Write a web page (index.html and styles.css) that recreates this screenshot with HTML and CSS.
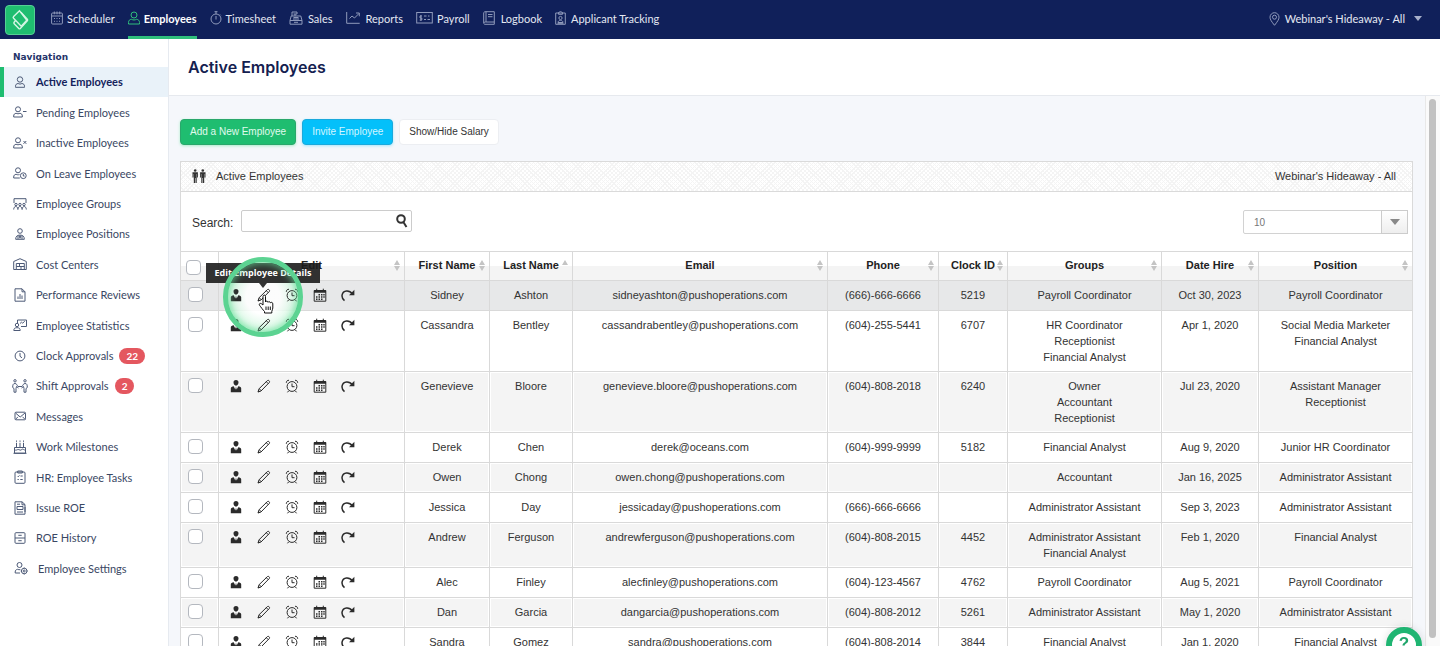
FILE: index.html
```html
<!DOCTYPE html>
<html lang="en">
<head>
<meta charset="utf-8">
<title>Active Employees</title>
<link rel="stylesheet" href="styles.css">
</head>
<body>
<svg class="sprite" aria-hidden="true">
  <symbol id="person" viewBox="0 0 14 14"><circle cx="7" cy="4" r="3"/><path d="M1.500 13v-1.500c0-2 1.200-3 3-3.200 1.500.9 3.500.9 5 0 1.800.2 3 1.200 3 3.200V13z"/></symbol>
  <symbol id="i-user" viewBox="0 0 14 14"><circle cx="7" cy="4.500" r="2.700"/><path d="M2.500 12.300v-1c0-1.800 1-2.600 2.600-2.800 1.200.7 2.600.7 3.800 0 1.600.2 2.600 1 2.600 2.800v1z"/></symbol>
  <symbol id="i-pending" viewBox="0 0 14 14"><circle cx="5" cy="4.300" r="2.500"/><path d="M.7 12v-1c0-1.700.9-2.500 2.400-2.700 1.200.6 2.600.6 3.800 0 1.500.2 2.400 1 2.400 2.700v1zM10 6.500h3.500"/></symbol>
  <symbol id="i-inactive" viewBox="0 0 14 14"><circle cx="5" cy="4.300" r="2.500"/><path d="M.7 12v-1c0-1.700.9-2.500 2.400-2.700 1.200.6 2.600.6 3.800 0 1.500.2 2.400 1 2.400 2.700v1zM10.500 5l2.800 2.800M13.300 5l-2.800 2.800"/></symbol>
  <symbol id="i-leave" viewBox="0 0 14 14"><circle cx="5" cy="4.300" r="2.500"/><path d="M6.800 12H.7v-1c0-1.700.9-2.500 2.400-2.700 1.200.6 2.200.6 3.400.2"/><circle cx="10.300" cy="9.700" r="2.900"/><path d="M10.300 8v2h1.300"/></symbol>
  <symbol id="i-groups" viewBox="0 0 14 14"><path d="M1 6V1.700h12V6"/><circle cx="3" cy="7.500" r="1.200"/><circle cx="7" cy="7.500" r="1.200"/><circle cx="11" cy="7.500" r="1.200"/><path d="M.7 12.500c0-4 4.200-4 4.200 0 0-4 4.200-4 4.200 0 0-4 4.200-4 4.200 0"/></symbol>
  <symbol id="i-position" viewBox="0 0 14 14"><circle cx="7" cy="4" r="2.300"/><path d="M2.700 12.300c0-3 1.500-4.200 4.300-4.200s4.300 1.200 4.300 4.200zM6 8.300l1 3 1-3M5 9v3M9 9v3"/></symbol>
  <symbol id="i-cost" viewBox="0 0 14 14"><path d="M.7 12.500v-8L7 1.700l6.300 2.800v8h-10V6.500h8v6M3.300 9.500h8M6.500 6.500v3M8 9.500v3M.7 12.500h3"/></symbol>
  <symbol id="i-review" viewBox="0 0 14 14"><path d="M2 .8h7l3 3v9.400H2zM9 .8v3h3M5 11V8.500M7 11V6M9 11V7.500"/></symbol>
  <symbol id="i-stats" viewBox="0 0 14 14"><path d="M4.500 5V2h9v6.500H8M7 5.500l1.500-1.300 1.200 1 2-2"/><circle cx="4" cy="7" r="1.700"/><path d="M.8 12.500c0-2 1-2.800 3.200-2.800s3.200.8 3.200 2.800z"/></symbol>
  <symbol id="i-clock" viewBox="0 0 14 14"><circle cx="7" cy="7" r="4.900"/><path d="M7 4v3.300l2 1.500"/></symbol>
  <symbol id="i-shift" viewBox="0 0 16 14"><circle cx="3" cy="1.800" r="1.200"/><circle cx="13" cy="1.800" r="1.200"/><path d="M3 4.500C1 4.500.7 6 .7 8.500L2 9.500v3.700h2V9.500l.5-2L6.500 9M3 4.500c1.500 0 2 1.500 3 3h4c1-1.500 1.500-3 3-3M13 4.500c2 0 2.300 1.500 2.300 4L14 9.500v3.700h-2V9.500l-.5-2L9.500 9"/></symbol>
  <symbol id="i-mail" viewBox="0 0 14 14"><rect x="2" y="3.200" width="10.500" height="7.600" rx="1"/><path d="M2.500 4l4.700 4L12 4M2.500 10.300l2.500-2.500M12 10.300L9.500 7.800"/></symbol>
  <symbol id="i-cake" viewBox="0 0 14 14"><path d="M1.500 13.200V7.500h11v5.700zM.5 13.300h13M1.500 9.500c1.400 1.500 2.400 0 3.700 0s2.300 1.500 3.600 0 2.300 1.500 3.700 0M3.500 7.500V2.800M7 7.500V2.800M10.500 7.500V2.800M3.500 1.800V.5M7 1.800V.5M10.500 1.800V.5"/></symbol>
  <symbol id="i-tasks" viewBox="0 0 14 14"><rect x="2" y="2" width="10" height="11.300" rx="1"/><path d="M4.700 2V1h4.600v2H4.700zM4.500 6l.7.700L6.500 5.500M7.500 6h2.200M4.500 9.500h1.300M7.300 9.500h2.400"/></symbol>
  <symbol id="i-issue" viewBox="0 0 14 14"><path d="M2 .8h7l3 2.700v9.700H2zM9 .8v3h3M4 3.200h3M4 5.500h6v3H4zM4 11h6M12 6v5"/></symbol>
  <symbol id="i-history" viewBox="0 0 14 14"><rect x="2" y="1.700" width="10" height="10.600" rx="1"/><path d="M2 7h10M5.300 4.300h3.400M5.300 9.700h3.400"/></symbol>
  <symbol id="i-settings" viewBox="0 0 14 14"><circle cx="5.500" cy="4" r="2.500"/><path d="M6 12H1.200v-1c0-1.700.9-2.500 2.400-2.700 1 .5 1.600.5 2.700.3"/><circle cx="10.200" cy="10" r="2.800"/><circle cx="10.200" cy="10" r="1"/><path d="M10.200 6.500v1M10.200 12.500v1M6.700 10h1M12.700 10h1"/></symbol>
  <symbol id="a-profile" viewBox="0 0 14 14"><path d="M7 1c1.700 0 2.600 1 2.500 2.600C9.400 5.300 8.300 6.700 7 6.700S4.600 5.300 4.500 3.600C4.400 2 5.300 1 7 1zM1.800 13.200V9.300C1.800 8 3 7.500 4.700 7.200l1.600 3.300L7 7.700l.7 2.800 1.600-3.300c1.700.3 2.900.8 2.900 2.100v3.900z"/></symbol>
  <symbol id="a-pencil" viewBox="0 0 14 14"><path class="line" d="M1 13l1-3.200L10.500 1.500c.9-.8 2.700.9 1.900 1.900L4 12zM2.300 9.800l2 2M9.300 2.700l2 2"/><path d="M.8 13.300l.8-2.300 1.500 1.500z"/></symbol>
  <symbol id="a-alarm" viewBox="0 0 14 14"><circle class="line" cx="7" cy="7.500" r="4.900"/><path class="line" d="M7 4.500v3.200h2.500M3.700 11.800l-1.200 1.500M10.300 11.800l1.200 1.500M1.300 3.800c0-1.700 1.200-2.700 2.700-2.500M12.700 3.800c0-1.700-1.200-2.700-2.700-2.500"/></symbol>
  <symbol id="a-calendar" viewBox="0 0 14 14"><path class="line" d="M1.200 2.500h11.600v10.700H1.200zM3.700.7v2M10.300.7v2"/><path d="M1 2.300h12v2.500H1zM5.500 6h1.500v1.400H5.500zM8 6h1.500v1.400H8zM10.300 6h1.400v1.400h-1.400zM3 8.300h1.500v1.400H3zM5.500 8.300h1.500v1.400H5.500zM8 8.300h1.500v1.400H8zM10.300 8.300h1.400v1.400h-1.400zM3 10.600h1.500V12H3zM5.500 10.600h1.500V12H5.500zM8 10.600h1.500V12H8z"/></symbol>
  <symbol id="a-redo" viewBox="0 0 14 14"><path class="bold" d="M3.500 12.700C-.5 9.500.5 3.500 5.500 3c2.700-.2 4.500 1 5.800 2.800"/><path d="M13.400 1.800v5.400H8z"/></symbol>
</svg>

<header class="topbar">
  <a class="logo" href="#" aria-label="Home"><svg viewBox="0 0 28 28"><path d="M13.500 4.700L7.600 10.400c-.6.600-.6 1.200 0 1.800l7.600 8 4.900-5.200c.6-.6.600-1.200 0-1.800z"/><path d="M9.500 14.500l-1.400 1.700c-.4.500-.4 1 .1 1.500l4.600 4.800c.5.500 1 .5 1.500 0l7-7.600c.5-.6.500-1.200 0-1.800l-6.400-7"/></svg></a>
  <nav class="mainnav">
    <a href="#"><svg class="w12" viewBox="0 0 12 14"><rect x=".6" y="2" width="10.800" height="11" rx="1"/><path d="M.6 5h10.800M3.300.5v2.800M6 .5v2.800M8.700.5v2.800M3 7.500h1M5.500 7.500h1M8 7.500h1M3 10.300h1M5.500 10.300h1M8 10.300h1"/></svg>Scheduler</a>
    <a href="#" class="current"><svg class="w12" viewBox="1 0 12 14"><use href="#person" width="14" height="14"/></svg>Employees</a>
    <a href="#"><svg class="w12" viewBox="0 0 12 14"><circle cx="6" cy="8" r="5"/><path d="M6 5v3.500M4.500.7h3M6 .7V3M10 3.500l.8.800"/></svg>Timesheet</a>
    <a href="#"><svg class="w15" viewBox="0 0 15 14"><path d="M1 9.500h12v3.700H1zM1 9.500l1.200-4.500h9.600L13 9.500M3 5V1h5v2H4.500M6 3v2M4.500 6.500h5M4 8h6M5 11.300h4"/></svg>Sales</a>
    <a href="#"><svg class="w16" viewBox="0 0 16 14"><path d="M.7 1v11.300h13M3.500 7.500L6 5l2.500 2L13 2.500M10 2h3.300v3.300"/></svg>Reports</a>
    <a href="#"><svg class="w17" viewBox="0 0 17 14"><rect x=".7" y="1.500" width="15.600" height="10.500"/><path d="M6 5H4v2h1.800v2H3.700M4.900 4v6M8 5h2.500M8 8.500h2M11.500 8.500H14M12 5h1.500"/></svg>Payroll</a>
    <a href="#"><svg class="w14" viewBox="0 0 14 14"><path d="M3 .7h8.300v12.600H2c-1 0-1.300-.8-1.300-1.500V2C.7 1 1.500.7 3 .7zM3 .7V11M.7 12c.2-.8.800-1 1.600-1h9M5 3.500h4.500M5 5.700h4.500"/></svg>Logbook</a>
    <a href="#"><svg class="w12" viewBox="0 0 12 14"><path d="M.7 2h9.600v11.300H.7zM3.500 3.300V1.500L5.500.6l2 .9v1.800zM3 11.500c0-2.800 5-2.800 5 0zM2.500 12.300h6"/><circle cx="5.500" cy="7" r="1.600"/></svg>Applicant Tracking</a>
  </nav>
  <button class="location" type="button"><svg class="w12" viewBox="0 0 12 14"><path d="M5.500 13.300C2.500 9.500 1 7.500 1 5.200a4.500 4.500 0 0 1 9 0c0 2.300-1.500 4.300-4.500 8.100z"/><circle cx="5.500" cy="5.200" r="2"/></svg><span>Webinar's Hideaway - All</span><i class="caret"></i></button>
</header>

<div class="shell">
  <aside class="sidebar">
    <h2>Navigation</h2>
    <ul>
      <li class="active"><a href="#"><svg><use href="#i-user"/></svg>Active Employees</a></li>
      <li><a href="#"><svg><use href="#i-pending"/></svg>Pending Employees</a></li>
      <li><a href="#"><svg><use href="#i-inactive"/></svg>Inactive Employees</a></li>
      <li><a href="#"><svg><use href="#i-leave"/></svg>On Leave Employees</a></li>
      <li><a href="#"><svg><use href="#i-groups"/></svg>Employee Groups</a></li>
      <li><a href="#"><svg><use href="#i-position"/></svg>Employee Positions</a></li>
      <li><a href="#"><svg><use href="#i-cost"/></svg>Cost Centers</a></li>
      <li><a href="#"><svg><use href="#i-review"/></svg>Performance Reviews</a></li>
      <li><a href="#"><svg><use href="#i-stats"/></svg>Employee Statistics</a></li>
      <li><a href="#"><svg><use href="#i-clock"/></svg>Clock Approvals<span class="count">22</span></a></li>
      <li><a href="#"><svg class="wide"><use href="#i-shift"/></svg>Shift Approvals<span class="count">2</span></a></li>
      <li><a href="#"><svg><use href="#i-mail"/></svg>Messages</a></li>
      <li><a href="#"><svg><use href="#i-cake"/></svg>Work Milestones</a></li>
      <li><a href="#"><svg><use href="#i-tasks"/></svg>HR: Employee Tasks</a></li>
      <li><a href="#"><svg><use href="#i-issue"/></svg>Issue ROE</a></li>
      <li><a href="#"><svg><use href="#i-history"/></svg>ROE History</a></li>
      <li class="last"><a href="#"><svg><use href="#i-settings"/></svg>Employee Settings</a></li>
    </ul>
  </aside>

  <main class="main">
    <h1>Active Employees</h1>
    <div class="scroller">
      <div class="content">
        <div class="buttons">
          <button type="button" class="btn add">Add a New Employee</button>
          <button type="button" class="btn invite">Invite Employee</button>
          <button type="button" class="btn plain">Show/Hide Salary</button>
        </div>
        <section class="panel">
          <header class="panel-head">
            <svg viewBox="0 0 14 14"><circle cx="3.200" cy="1.500" r="1.300"/><circle cx="10.800" cy="1.500" r="1.300"/><path d="M.5 3.300h5.400V8.500H5V5h-.3v9H3.500V9H3v5H1.800V5H1.500v3.500H.5zM8.100 3.300h5.400v5.200h-1V5h-.3v9H11V9h-.5v5H9.300V5H9v3.500h-.9z"/></svg>
            <span>Active Employees</span>
            <span class="site">Webinar's Hideaway - All</span>
          </header>
          <div class="tools">
            <label for="search">Search:</label>
            <div class="searchbox">
              <input id="search" type="text">
              <svg viewBox="0 0 12 14"><circle cx="5" cy="5" r="3.800"/><path d="M7.300 8l3.200 5"/></svg>
            </div>
            <div class="pagesize">
              <select aria-label="Rows per page"><option>10</option><option>25</option><option>50</option></select>
              <span class="drop"><i></i></span>
            </div>
          </div>
          <table>
            <colgroup><col class="c-check"><col class="c-edit"><col class="c-first"><col class="c-last"><col><col class="c-phone"><col class="c-clock"><col class="c-groups"><col class="c-hire"><col class="c-pos"></colgroup>
            <thead><tr>
              <th class="check"><input type="checkbox" aria-label="Select all"></th>
              <th>Edit<i class="sort"></i></th>
              <th>First Name<i class="sort"></i></th>
              <th>Last Name<i class="sort up"></i></th>
              <th>Email<i class="sort"></i></th>
              <th>Phone<i class="sort"></i></th>
              <th>Clock ID<i class="sort"></i></th>
              <th>Groups<i class="sort"></i></th>
              <th>Date Hire<i class="sort"></i></th>
              <th>Position<i class="sort"></i></th>
            </tr></thead>
            <tbody id="rows"></tbody>
          </table>
        </section>
      </div>
      <div class="track"><div class="thumb"></div></div>
    </div>
  </main>
</div>
<button class="help" type="button" aria-label="Help"><span>?</span></button>

<template id="hover">
  <span class="glow"></span>
  <span class="tip" role="tooltip">Edit Employee Details</span>
  <span class="ring"></span>
  <svg class="hand" viewBox="0 0 16 20"><path d="M5 11V2.500C5 .6 7.500.6 7.500 2.500V8c.3-1.300 2.300-1.200 2.500.3.400-1 2.200-.8 2.400.5.500-.9 2.400-.6 2.400 1V14c0 1.500-.8 2-1 3.300v1.700H6.500v-1.500C5 16 2.800 13 1.500 11.200.7 10 2.200 8.700 3.500 9.800z"/><path d="M8 12.500v3.500M10.200 12.500v3.500M12.300 12.500v3.500"/></svg>
</template>
<script src="app.js"></script>
</body>
</html>
```
FILE: styles.css
```css
* { box-sizing: border-box; }
body {
  margin: 0;
  height: 100vh;
  display: flex;
  flex-direction: column;
  overflow: hidden;
  font-family: "Liberation Sans", Arial, sans-serif;
  font-size: 11px;
  color: #333;
  background: #f5f7fb;
}
.sprite { display: none; }
a { color: inherit; text-decoration: none; }
button { font: inherit; margin: 0; }

/* Top bar */
.topbar {
  display: flex;
  align-items: center;
  height: 39px;
  flex: none;
  padding: 0 18px 0 5px;
  background: #10205a;
  color: #e4e8f2;
  font-family: Lato, sans-serif;
  font-size: 11px;
}
.topbar svg {
  height: 14px;
  fill: none;
  stroke: #8f9abb;
  stroke-width: 1;
}
.w12 { width: 12px; }
.w14 { width: 14px; }
.w15 { width: 15px; }
.w16 { width: 16px; }
.w17 { width: 17px; }
.logo {
  width: 30px;
  height: 30px;
  border-radius: 4px;
  background: #1fbd70;
  border: 1px solid #55cf94;
}
.topbar .logo svg {
  display: block;
  width: 28px;
  height: 28px;
  stroke: #d5f6e5;
  stroke-width: 1.400;
}
.mainnav {
  display: flex;
  height: 100%;
  gap: 13px;
  margin-left: 16px;
}
.mainnav a {
  display: flex;
  align-items: center;
  gap: 4px;
  border-bottom: 3px solid transparent;
}
.mainnav .current {
  color: #fff;
  font-weight: 700;
  border-bottom-color: #2fbf7c;
}
.mainnav .current svg { stroke: #2fbf7c; }
.location {
  display: flex;
  align-items: center;
  gap: 4px;
  height: 100%;
  margin-left: auto;
  padding: 0 0 2px;
  border: 0;
  background: none;
  color: inherit;
}
.caret {
  margin-left: 5px;
  border: 4px solid transparent;
  border-top: 5px solid #a8b0ca;
  border-bottom: 0;
}

/* Sidebar */
.shell { display: flex; flex: 1; min-height: 0; }
.sidebar {
  width: 169px;
  flex: none;
  background: #fff;
  border-right: 1px solid #e6eaf0;
  font-family: Lato, sans-serif;
  font-size: 11px;
  color: #3a4763;
}
.sidebar h2 {
  margin: 0;
  padding: 11px 0 3px 13px;
  font: 700 9px/14px "DejaVu Sans", sans-serif;
  color: #25346a;
}
.sidebar ul { list-style: none; margin: 0; padding: 0; }
.sidebar a {
  display: flex;
  align-items: center;
  height: 30px;
  padding: 0 0 1px 13px;
}
.sidebar li:nth-child(5n+2) a, .sidebar li:nth-child(5n+4) a { height: 31px; }
.sidebar svg {
  width: 14px;
  height: 14px;
  margin-right: 9px;
  fill: none;
  stroke: #4d5a77;
  stroke-width: 1;
}
.sidebar .wide { width: 16px; margin: 0 8px 0 -1px; }
.sidebar .active a {
  padding-left: 9px;
  border-left: 4px solid #1fbd70;
  background: #e9f2f9;
  color: #14235c;
  font-weight: 700;
}
.sidebar .last a { padding-left: 14px; }
.sidebar .last svg { margin-right: 10px; }
.count {
  margin-left: 6px;
  padding: 0 7px;
  border-radius: 8px;
  background: #e4575f;
  color: #fff;
  font-size: 10px;
  font-weight: 700;
  line-height: 16px;
}

/* Main column */
.main {
  flex: 1;
  min-width: 0;
  display: flex;
  flex-direction: column;
}
h1 {
  margin: 0;
  padding: 18px 19px;
  background: #fff;
  border-bottom: 1px solid #e6e9ee;
  font: 600 16px/20px Inter, sans-serif;
  color: #14204f;
}
.scroller { display: flex; flex: 1; min-height: 0; }
.content {
  flex: 1;
  min-width: 0;
  overflow: hidden;
  padding: 23px 12px 0 11px;
}
.track {
  width: 15px;
  padding: 3px 4px 8px 3px;
  background: #fafafa;
  border-left: 1px solid #e8e8e8;
}
.thumb { height: 100%; border-radius: 4px; background: #c1c1c1; }

.buttons { display: flex; gap: 6px; }
.btn {
  height: 26px;
  padding: 0 9px 1px;
  border-radius: 4px;
  border: 1px solid;
  font-size: 10px;
}
.add { background: #1fbd70; border-color: #2aa76b; color: #e0fbee; box-shadow: 0 1px 3px #a9ecca; }
.invite { background: #04c0fa; border-color: #1aa9dc; color: #d3f6ff; box-shadow: 0 1px 3px #a4e6fb; }
.plain { background: #fff; border-color: #eceef2; color: #333; }

.panel {
  margin-top: 16px;
  border: 1px solid #dadada;
  background: #fff;
}
.panel-head {
  display: flex;
  align-items: center;
  height: 30px;
  padding: 0 16px 2px 11px;
  border-bottom: 1px solid #dadada;
  background:
    repeating-linear-gradient(45deg, transparent 0 2px, #f4f4f4 2px 3px),
    repeating-linear-gradient(-45deg, #fff 0 2px, #f4f4f4 2px 3px);
}
.panel-head svg { width: 14px; height: 14px; margin-right: 10px; fill: #333; }
.site { margin-left: auto; }
.tools {
  display: flex;
  align-items: flex-start;
  padding: 18px 4px 15px 11px;
}
.tools label { width: 49px; font-size: 12px; line-height: 27px; height: 26px; }
.searchbox, .pagesize { position: relative; display: flex; }
.searchbox { width: 171px; }
.searchbox input {
  width: 100%;
  height: 22px;
  padding: 0 22px 0 6px;
  border: 1px solid #ccc;
  border-radius: 2px;
  font: inherit;
}
.searchbox svg {
  position: absolute;
  right: 4px;
  top: 4px;
  width: 12px;
  height: 14px;
  fill: none;
  stroke: #333;
  stroke-width: 2;
}
.pagesize { width: 165px; margin-left: auto; }
.pagesize select {
  appearance: none;
  width: 100%;
  height: 24px;
  padding: 0 10px;
  border: 1px solid #d2d2d2;
  border-radius: 2px;
  background: #fff;
  color: #777;
  font: inherit;
  font-size: 10px;
}
.drop {
  position: absolute;
  top: 0;
  right: 0;
  bottom: 0;
  width: 27px;
  display: flex;
  align-items: center;
  justify-content: center;
  border: 1px solid #ccc;
  background: linear-gradient(#fff, #eee);
  pointer-events: none;
}
.drop i { border: 5px solid transparent; border-top: 6px solid #888; border-bottom: 0; }

/* Table */
table {
  width: 100%;
  table-layout: fixed;
  border-collapse: separate;
  border-spacing: 0;
  text-align: center;
  line-height: 16px;
}
.c-check { width: 38px; }
.c-edit { width: 186px; }
.c-first { width: 85px; }
.c-last { width: 83px; }
.c-phone { width: 111px; }
.c-clock { width: 69px; }
.c-groups { width: 154px; }
.c-hire { width: 97px; }
.c-pos { width: 153px; }
th, td {
  border-top: 1px solid #d9d9d9;
  border-right: 1px solid #d9d9d9;
}
th:last-child, td:last-child { border-right: 0; }
th {
  position: relative;
  height: 29px;
  padding: 0 0 2px;
  background: linear-gradient(#fff 50%, #f4f4f4 50%);
  color: #222;
}
td {
  padding: 6px 2px;
  vertical-align: top;
  background: #fff;
}
tbody tr:nth-child(odd) td { background: #f4f4f4; box-shadow: inset 0 0 0 1px #fff; }
tbody tr.hovered td { background: #e7e8e9; box-shadow: none; }
.check { padding: 6px 0 0 7px; text-align: left; }
th.check { padding: 3px 0 0 5px; }
input[type="checkbox"] {
  appearance: none;
  display: block;
  width: 15px;
  height: 15px;
  margin: 0;
  border: 1px solid #b4b8bf;
  border-radius: 4px;
  background: #fff;
}
.sort {
  position: absolute;
  right: 4px;
  top: 8px;
}
.sort::before, .sort::after {
  content: "";
  display: block;
  border: 3px solid transparent;
  border-top-width: 0;
  border-bottom: 5px solid #c4c4c4;
}
.sort::after {
  margin-top: 1px;
  border-top: 5px solid #c4c4c4;
  border-bottom-width: 0;
}
.sort.up::after { display: none; }
.edit { padding: 6px 0 0 10px; }
.actions { display: flex; gap: 14px; height: 23px; }
.actions button {
  position: relative;
  width: 14px;
  height: 16px;
  padding: 1px 0;
  border: 0;
  background: none;
}
.actions svg {
  position: relative;
  z-index: 2;
  display: block;
  width: 14px;
  height: 14px;
  fill: #2b2b2b;
}
.line { fill: none; stroke: #2b2b2b; stroke-width: 1; }
.bold { fill: none; stroke: #2b2b2b; stroke-width: 1.500; }

/* Hovered action */
.glow, .ring {
  position: absolute;
  left: -34px;
  top: -30px;
  width: 80px;
  height: 80px;
  border-radius: 50%;
}
.glow {
  z-index: 1;
  background: radial-gradient(circle, #fffd 30%, #d8f8e4cc 54%, #a5eec0cc 68%);
}
.ring { z-index: 4; border: 5px solid #5cd392; box-shadow: inset 0 0 6px 2px #6ae09c99; }
.tip {
  position: absolute;
  z-index: 2;
  left: -51px;
  bottom: 20px;
  width: 114px;
  background: #1c1c1ce6;
  color: #fff;
  font: 700 9px/20px "Open Sans", sans-serif;
  text-align: center;
  white-space: nowrap;
}
.tip::after {
  content: "";
  position: absolute;
  left: 53px;
  top: 100%;
  border: 4px solid transparent;
  border-top: 5px solid #333;
  border-bottom: 0;
}
.actions .hand {
  position: absolute;
  z-index: 5;
  left: 1px;
  top: 7px;
  width: 16px;
  height: 20px;
  fill: #fff;
  stroke: #111;
  stroke-width: 1;
}

.help {
  position: fixed;
  right: 18px;
  bottom: -17px;
  width: 36px;
  height: 36px;
  padding: 0;
  border: 6px solid #1fb572;
  border-radius: 50%;
  background: #fff;
  color: #1fa56a;
  font-size: 17px;
  font-weight: 700;
  line-height: 20px;
  box-shadow: 0 0 8px #0002;
}
.help span { display: block; margin-top: -2px; }
```
FILE: app.js
```js
const employees = [
  ["Sidney", "Ashton", "sidneyashton@pushoperations.com", "(666)-666-6666", "5219", ["Payroll Coordinator"], "Oct 30, 2023", ["Payroll Coordinator"]],
  ["Cassandra", "Bentley", "cassandrabentley@pushoperations.com", "(604)-255-5441", "6707", ["HR Coordinator", "Receptionist", "Financial Analyst"], "Apr 1, 2020", ["Social Media Marketer", "Financial Analyst"]],
  ["Genevieve", "Bloore", "genevieve.bloore@pushoperations.com", "(604)-808-2018", "6240", ["Owner", "Accountant", "Receptionist"], "Jul 23, 2020", ["Assistant Manager", "Receptionist"]],
  ["Derek", "Chen", "derek@oceans.com", "(604)-999-9999", "5182", ["Financial Analyst"], "Aug 9, 2020", ["Junior HR Coordinator"]],
  ["Owen", "Chong", "owen.chong@pushoperations.com", "", "", ["Accountant"], "Jan 16, 2025", ["Administrator Assistant"]],
  ["Jessica", "Day", "jessicaday@pushoperations.com", "(666)-666-6666", "", ["Administrator Assistant"], "Sep 3, 2023", ["Administrator Assistant"]],
  ["Andrew", "Ferguson", "andrewferguson@pushoperations.com", "(604)-808-2015", "4452", ["Administrator Assistant", "Financial Analyst"], "Feb 1, 2020", ["Financial Analyst"]],
  ["Alec", "Finley", "alecfinley@pushoperations.com", "(604)-123-4567", "4762", ["Payroll Coordinator"], "Aug 5, 2021", ["Payroll Coordinator"]],
  ["Dan", "Garcia", "dangarcia@pushoperations.com", "(604)-808-2012", "5261", ["Administrator Assistant"], "May 1, 2020", ["Administrator Assistant"]],
  ["Sandra", "Gomez", "sandra@pushoperations.com", "(604)-808-2014", "3844", ["Financial Analyst"], "Jan 1, 2020", ["Financial Analyst"]]
];
const actions = [["profile", "Profile"], ["pencil", "Edit Employee Details"], ["alarm", "Clock"], ["calendar", "Schedule"], ["redo", "Deactivate"]];

document.getElementById("rows").innerHTML = employees.map((e) => {
  const buttons = actions.map(([icon, label]) =>
    `<button type="button" class="${icon}" aria-label="${label}"><svg><use href="#a-${icon}"/></svg></button>`).join("");
  const cells = e.map((v) => `<td>${Array.isArray(v) ? v.join("<br>") : v}</td>`).join("");
  return `<tr><td class="check"><input type="checkbox" aria-label="Select ${e[0]} ${e[1]}"></td><td class="edit"><div class="actions">${buttons}</div></td>${cells}</tr>`;
}).join("");

const first = document.querySelector("#rows tr");
first.classList.add("hovered");
first.querySelector(".pencil").append(document.getElementById("hover").content.cloneNode(true));
```
